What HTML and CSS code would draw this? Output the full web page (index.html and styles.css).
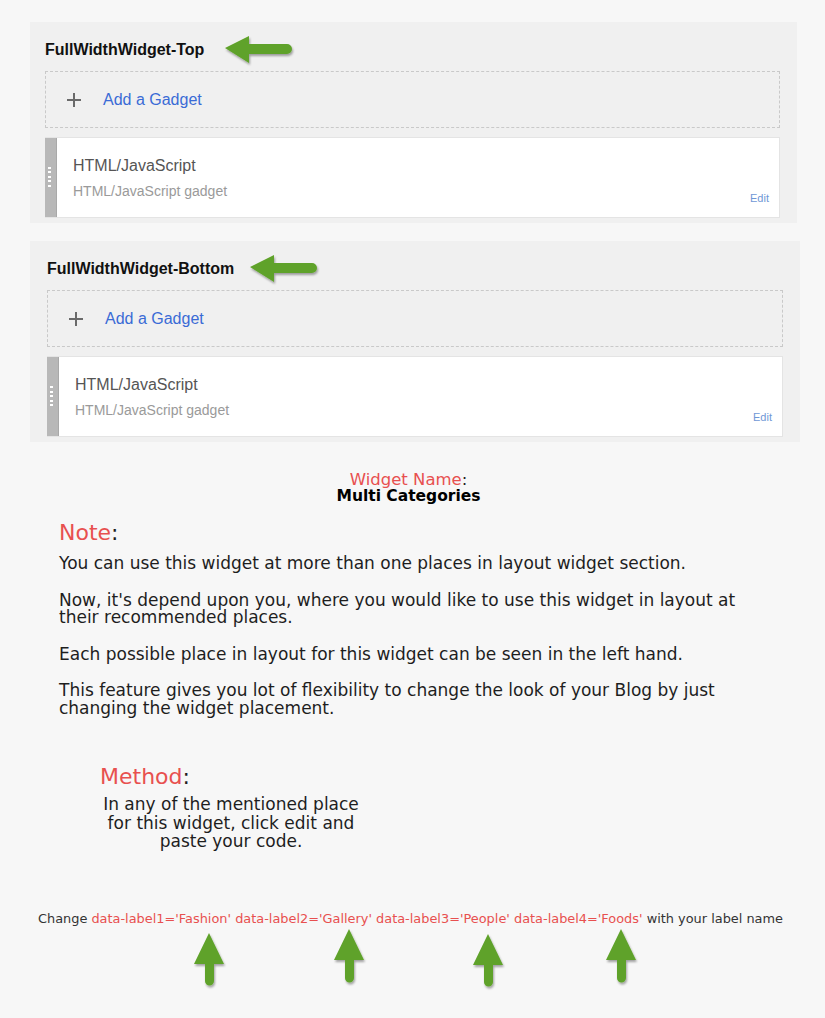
FILE: index.html
```html
<!DOCTYPE html>
<html>
<head>
<meta charset="utf-8">
<link rel="stylesheet" href="styles.css">
</head>
<body>
<section class="panel panel-top">
  <div class="panel-title">
    <span>FullWidthWidget-Top</span>
    <svg class="arrow-left" width="72" height="34" viewBox="0 0 72 34">
      <defs><filter id="sh1" x="-20%" y="-30%" width="140%" height="160%"><feDropShadow dx="1" dy="2" stdDeviation="1.3" flood-color="#000" flood-opacity="0.35"/></filter></defs>
      <path filter="url(#sh1)" d="M2 14 L26 2 L26 10 L64 10 A5 5 0 0 1 64 20 L26 20 L26 29 Z" fill="#5fa22a"/>
    </svg>
  </div>
  <div class="add-gadget">
    <svg class="plus" width="14" height="14" viewBox="0 0 14 14"><path d="M7 0v14M0 7h14" stroke="#6a6a6a" stroke-width="2"/></svg>
    <span class="add-link">Add a Gadget</span>
  </div>
  <div class="gadget-card">
    <div class="grip"><span class="dots"></span></div>
    <div class="gadget-info">
      <div class="gadget-name">HTML/JavaScript</div>
      <div class="gadget-type">HTML/JavaScript gadget</div>
    </div>
    <span class="edit">Edit</span>
  </div>
</section>

<section class="panel panel-bottom">
  <div class="panel-title">
    <span>FullWidthWidget-Bottom</span>
    <svg class="arrow-left" width="72" height="34" viewBox="0 0 72 34">
      <defs><filter id="sh2" x="-20%" y="-30%" width="140%" height="160%"><feDropShadow dx="1" dy="2" stdDeviation="1.3" flood-color="#000" flood-opacity="0.35"/></filter></defs>
      <path filter="url(#sh2)" d="M2 14 L26 2 L26 10 L64 10 A5 5 0 0 1 64 20 L26 20 L26 29 Z" fill="#5fa22a"/>
    </svg>
  </div>
  <div class="add-gadget">
    <svg class="plus" width="14" height="14" viewBox="0 0 14 14"><path d="M7 0v14M0 7h14" stroke="#6a6a6a" stroke-width="2"/></svg>
    <span class="add-link">Add a Gadget</span>
  </div>
  <div class="gadget-card">
    <div class="grip"><span class="dots"></span></div>
    <div class="gadget-info">
      <div class="gadget-name">HTML/JavaScript</div>
      <div class="gadget-type">HTML/JavaScript gadget</div>
    </div>
    <span class="edit">Edit</span>
  </div>
</section>

<div class="widget-name">
  <div><span class="red">Widget Name</span>:</div>
  <div class="name-bold">Multi Categories</div>
</div>

<div class="note">
  <div class="label"><span class="red">Note</span>:</div>
  <p>You can use this widget at more than one places in layout widget section.</p>
  <p>Now, it's depend upon you, where you would like to use this widget in layout at their recommended places.</p>
  <p>Each possible place in layout for this widget can be seen in the left hand.</p>
  <p>This feature gives you lot of flexibility to change the look of your Blog by just changing the widget placement.</p>
</div>

<div class="method">
  <div class="label"><span class="red">Method</span>:</div>
  <p>In any of the mentioned place for this widget, click edit and paste your code.</p>
</div>

<p class="change">Change <span class="red">data-label1='Fashion' data-label2='Gallery' data-label3='People' data-label4='Foods'</span> with your label name</p>

<svg class="arrows-up" width="825" height="66" viewBox="0 0 825 66">
  <defs><filter id="sh3" x="-40%" y="-20%" width="180%" height="140%"><feDropShadow dx="1" dy="2" stdDeviation="1.3" flood-color="#000" flood-opacity="0.35"/></filter></defs>
  <g fill="#5fa22a" filter="url(#sh3)">
    <path d="M209 4 L224 35 L214 35 L214 52 A4.5 4.5 0 0 1 205 52 L205 35 L194 35 Z"/>
    <path d="M349 0 L364 31 L354 31 L354 49 A4.5 4.5 0 0 1 345 49 L345 31 L334 31 Z"/>
    <path d="M488 5 L503 36 L493 36 L493 53 A4.5 4.5 0 0 1 484 53 L484 36 L473 36 Z"/>
    <path d="M621 0 L636 31 L626 31 L626 49 A4.5 4.5 0 0 1 617 49 L617 31 L606 31 Z"/>
  </g>
</svg>
</body>
</html>
```

FILE: styles.css
```css
* { box-sizing: border-box; }
html, body { margin: 0; padding: 0; }
body {
  background: #f7f7f7;
  font-family: "DejaVu Sans", Verdana, sans-serif;
  color: #1e1e1e;
  width: 825px;
  height: 1018px;
  overflow: hidden;
}
.panel {
  background: #f0f0f0;
  font-family: "Liberation Sans", Arial, sans-serif;
  margin-left: 30px;
  padding: 13px 17px 5px 15px;
}
.panel-top { margin-top: 22px; width: 767px; }
.panel-bottom { margin-top: 18px; width: 770px; padding-left: 17px; }
.panel-title {
  display: flex;
  align-items: center;
  gap: 19px;
  height: 30px;
  margin-bottom: 6px;
  font-weight: bold;
  font-size: 16px;
  color: #111;
}
.panel-bottom .panel-title { gap: 14px; }
.arrow-left { margin-top: 1px; }
.add-gadget {
  display: flex;
  align-items: center;
  height: 57px;
  border: 1px dashed #c9c9c9;
  padding-left: 21px;
}
.plus { margin-right: 22px; }
.add-link { color: #3a6bd6; font-size: 16px; }
.gadget-card {
  display: flex;
  margin-top: 9px;
  height: 81px;
  background: #fff;
  border: 1px solid #e4e4e4;
  border-left: none;
}
.grip {
  width: 12px;
  background: #b8b8b8;
  border-right: 1px solid #a9a9a9;
  display: flex;
  align-items: center;
  padding-left: 3px;
}
.dots {
  display: block;
  width: 3px;
  height: 22px;
  background: repeating-linear-gradient(to bottom, #fff 0 2px, transparent 2px 4.5px);
}
.gadget-info { flex: 1; padding: 18px 0 0 16px; }
.gadget-name { font-size: 16px; color: #555; line-height: 20px; }
.gadget-type { font-size: 14px; color: #9a9a9a; line-height: 16px; margin-top: 7px; }
.edit {
  align-self: flex-end;
  font-size: 11px;
  color: #6f97d6;
  margin: 0 10px 12px 0;
  line-height: 13px;
}
.red { color: #e8504f; }
.widget-name {
  margin-top: 29px;
  padding-right: 8px;
  text-align: center;
  font-size: 16.5px;
  line-height: 17px;
  height: 34px;
  overflow: hidden;
}
.name-bold { font-weight: bold; color: #000; font-size: 15.5px; }
.note {
  margin-top: 15px;
  padding-left: 59px;
  width: 745px;
}
.label { font-size: 22px; line-height: 26px; }
.note p, .method p {
  margin: 0;
  font-size: 17px;
  line-height: 17.5px;
}
.note .label { margin-bottom: 9px; }
.note p + p { margin-top: 19px; }
.method {
  margin-top: 47px;
  margin-left: 100px;
  width: 262px;
}
.method .label { margin-bottom: 5px; }
.method p { text-align: center; line-height: 18.5px; }
.change {
  margin: 60px 0 0;
  padding-right: 4px;
  text-align: center;
  font-size: 12.9px;
  line-height: 16px;
  color: #333;
}
.arrows-up { display: block; margin-top: 2px; }
```
